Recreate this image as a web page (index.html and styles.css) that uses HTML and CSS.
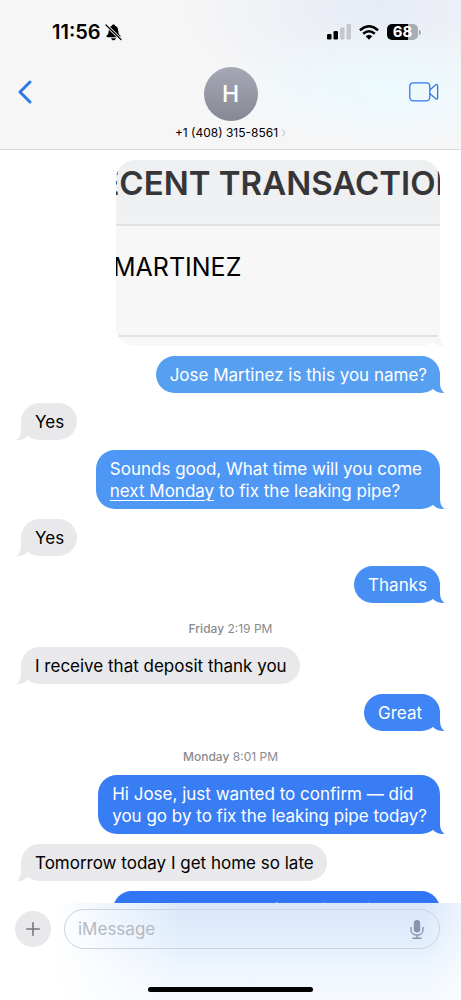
FILE: index.html
```html
<!DOCTYPE html>
<html lang="en">
<head>
<meta charset="utf-8">
<meta name="viewport" content="width=device-width, initial-scale=1">
<title>Messages</title>
<link rel="stylesheet" href="styles.css">
</head>
<body>
<svg class="sprite" aria-hidden="true">
  <symbol id="tail" viewBox="0 0 17 20">
    <path d="M12 0V9C12 14.500 13.500 18.500 17 19.800C12 20.300 8 19 5 16H0V0Z"/>
  </symbol>
</svg>
<div class="phone">
  <header class="top">
    <div class="status">
      <div class="status-left">
        <span class="time">11:56</span>
        <svg class="bell" viewBox="0 0 17 17" aria-hidden="true">
          <path d="M8.500 0.500C9.600 .5 10 1.200 10.100 1.800C12.300 2.500 13.200 4.500 13.300 7C13.400 9.500 14 10.300 15.200 11.500C15.900 12.300 15.500 13.200 14.500 13.200H2.500C1.500 13.200 1.100 12.300 1.800 11.500C3 10.300 3.600 9.500 3.700 7C3.800 4.500 4.700 2.500 6.900 1.800C7 1.200 7.400.5 8.500.5ZM6.200 14.200H10.800C10.500 15.600 9.700 16.300 8.500 16.300S6.500 15.600 6.200 14.200Z"/>
          <path d="M1.200 1.200L16 15.500" stroke="#f6f6f7" stroke-width="3"/>
          <path d="M1 1L16 15.500" stroke="#000" stroke-width="1.200" stroke-linecap="round"/>
        </svg>
      </div>
      <div class="status-right">
        <svg class="signal" viewBox="0 0 25 16" aria-hidden="true">
          <rect x="0" y="10" width="4.500" height="5.500" rx="1.200"/>
          <rect x="6.500" y="7" width="4.500" height="8.500" rx="1.200"/>
          <g fill="#c3c7ce"><rect x="13" y="3.500" width="4.500" height="12" rx="1.200"/><rect x="19.500" y="0" width="4.500" height="15.500" rx="1.200"/></g>
        </svg>
        <svg class="wifi" viewBox="0 0 20 15" aria-hidden="true">
          <g fill="none" stroke="#000" stroke-width="2.500"><path d="M.9 5.300Q10-2.800 19.100 5.300"/><path d="M4.200 8.800Q10 3.700 15.800 8.800"/></g>
          <path d="M6.700 11.300Q10 8.300 13.300 11.300L10 14.700Z"/>
        </svg>
        <div class="battery">68</div>
        <span class="battery-cap"></span>
      </div>
    </div>
    <nav class="bar">
      <button class="icon-btn" aria-label="Back">
        <svg class="back" viewBox="0 0 14 24" aria-hidden="true"><path d="M12 2L2 12L12 22"/></svg>
      </button>
      <button class="contact">
        <span class="avatar">H</span>
        <span class="number">+1 (408) 315-8561
          <svg class="chev" viewBox="0 0 5 8" aria-hidden="true"><path d="M1 .5L4 4L1 7.500"/></svg>
        </span>
      </button>
      <button class="icon-btn end" aria-label="Video call">
        <svg class="video" viewBox="0 0 30 20" aria-hidden="true"><rect x=".8" y=".8" width="20" height="18" rx="3.500"/><path d="M20.800 8L26.500 3Q28.600 1.600 28.600 3.800V15.800Q28.600 18 26.500 16.600L20.800 11.600"/></svg>
      </button>
    </nav>
  </header>

  <main class="chat">
    <div class="photo">
      <div class="photo-card">
        <div class="photo-head">RECENT TRANSACTIONS</div>
        <div class="photo-row">MARTINEZ</div>
      </div>
      <svg class="tail"><use href="#tail"/></svg>
    </div>
    <div class="bubble sent s1">Jose Martinez is this you name?<svg class="tail"><use href="#tail"/></svg></div>
    <div class="bubble got">Yes<svg class="tail"><use href="#tail"/></svg></div>
    <div class="bubble sent roomy s2">Sounds good, What time will you come<br><a href="#monday">next Monday</a> to fix the leaking pipe?<svg class="tail"><use href="#tail"/></svg></div>
    <div class="bubble got">Yes<svg class="tail"><use href="#tail"/></svg></div>
    <div class="bubble sent s3">Thanks<svg class="tail"><use href="#tail"/></svg></div>
    <div class="stamp"><b>Friday</b> 2:19 PM</div>
    <div class="bubble got">I receive that deposit thank you<svg class="tail"><use href="#tail"/></svg></div>
    <div class="bubble sent roomy s4">Great<svg class="tail"><use href="#tail"/></svg></div>
    <div class="stamp"><b>Monday</b> 8:01 PM</div>
    <div class="bubble sent s5">Hi Jose, just wanted to confirm — did<br>you go by to fix the leaking pipe today?<svg class="tail"><use href="#tail"/></svg></div>
    <div class="bubble got">Tomorrow today I get home so late<svg class="tail"><use href="#tail"/></svg></div>
    <div class="bubble sent s6">No problem what time of day for both<svg class="tail"><use href="#tail"/></svg></div>
  </main>

  <footer class="composer">
    <div class="compose-row">
      <button class="plus" aria-label="Add attachment">
        <svg viewBox="0 0 14 14" aria-hidden="true"><path d="M7 .8V13.200M.8 7H13.200"/></svg>
      </button>
      <div class="field">
        <input type="text" placeholder="iMessage" aria-label="iMessage">
        <button class="mic" aria-label="Dictate">
          <svg viewBox="0 0 14 19" aria-hidden="true"><rect x="3.800" y="0" width="6.400" height="12.500" rx="3.200" fill="#8795aa"/><path d="M1 7.500V9.500C1 17 13 17 13 9.500V7.500M7 15V18M3 18.200H11" fill="none" stroke="#8795aa" stroke-width="1.400" stroke-linecap="round"/></svg>
        </button>
      </div>
    </div>
    <div class="home"></div>
  </footer>
</div>
</body>
</html>
```
FILE: styles.css
```css
* { box-sizing: border-box; }
body { margin: 0; background: #fff; color: #000; font-family: Inter, "Liberation Sans", sans-serif; }
button { border: 0; padding: 0; background: none; font: inherit; color: inherit; }
svg { display: block; }
.sprite { position: absolute; width: 0; height: 0; }
.phone { display: flex; flex-direction: column; height: 100vh; overflow: hidden; }

.top {
  flex: none;
  padding: 20px 22px 8px;
  border-bottom: 1px solid #dcdde0;
  background:
    radial-gradient(ellipse 38% 42% at 84% 58%, #ecfaff 0%, #ecfaff00 100%),
    radial-gradient(ellipse 42% 65% at 82% 5%, #e6ebf5 0%, #e6ebf500 100%),
    #f6f6f7;
}
.status { display: flex; justify-content: space-between; align-items: center; height: 24px; padding: 0 18px 0 30px; }
.status-left, .status-right { display: flex; align-items: center; }
.time { font-size: 20px; font-weight: 600; line-height: 24px; }
.bell { width: 17px; height: 17px; margin-left: 4px; }
.signal { width: 25px; height: 16px; }
.wifi { width: 20px; height: 15px; margin-left: 7px; }
.battery {
  width: 31px; height: 16px; margin-left: 8px; border-radius: 5px;
  background: linear-gradient(90deg, #000 68%, #a7adb4 68%);
  color: #fff; font-size: 15px; font-weight: 700; line-height: 16px; text-align: center;
}
.battery-cap { width: 2px; height: 5px; margin-left: 1px; border-radius: 0 2px 2px 0; background: #a7adb4; }

.bar { display: grid; grid-template-columns: 1fr auto 1fr; align-items: start; padding-top: 23px; }
.icon-btn { display: flex; align-items: center; height: 50px; justify-self: start; }
.icon-btn.end { justify-self: end; }
.back { width: 14px; height: 24px; margin-left: -4px; fill: none; stroke: #2f78ea; stroke-width: 3; stroke-linecap: round; stroke-linejoin: round; }
.video { width: 30px; height: 20px; fill: none; stroke: #2f78ea; stroke-width: 1.300; }
.contact { display: flex; flex-direction: column; align-items: center; gap: 4px; }
.avatar { width: 54px; height: 54px; border-radius: 50%; background: linear-gradient(#a6a9b5, #868994); color: #fff; font-size: 23px; font-weight: 500; line-height: 54px; text-align: center; }
.number { display: flex; align-items: center; gap: 3px; font-size: 12px; line-height: 16px; }
.chev { width: 5px; height: 8px; fill: none; stroke: #b9bbc0; }

.chat { flex: 1; min-height: 0; overflow: hidden; display: flex; flex-direction: column; gap: 10px; padding: 10px 21px 0; }
.bubble { position: relative; flex: none; padding: 8px 13px 7px; border-radius: 19px; font-size: 17px; line-height: 22px; white-space: nowrap; }
.sent { align-self: flex-end; padding-left: 14px; color: #fff; }
.roomy { padding-right: 18px; }
.got { align-self: flex-start; padding-left: 14px; background: #e9e9eb; color: #000; }
.tail { position: absolute; right: -5px; bottom: 0; width: 17px; height: 20px; z-index: -1; fill: #57a0f1; }
.got .tail { right: auto; left: -5px; transform: scaleX(-1); fill: #e9e9eb; }
.bubble a { color: inherit; text-decoration: underline; text-decoration-thickness: 1px; text-underline-offset: 3px; }
.s1 { background: #57a0f1; }
.s2 { background: #4e97f4; }
.s2 .tail { fill: #4e97f4; }
.s3 { background: #488ff4; }
.s3 .tail { fill: #488ff4; }
.s4 { background: #3f85f5; }
.s4 .tail { fill: #3f85f5; }
.s5 { background: #397df5; }
.s5 .tail { fill: #397df5; }
.s6 { background: #3276f5; }
.s6 .tail { fill: #3276f5; }
.stamp { flex: none; padding-top: 8px; color: #8a8a8e; font-size: 12px; line-height: 16px; text-align: center; }
.stamp b { font-weight: 500; }

.photo { position: relative; flex: none; align-self: flex-end; width: 78%; max-width: 324px; height: 186px; }
.photo .tail { fill: #f7f7f7; }
.photo-card { height: 100%; overflow: hidden; border-radius: 19px; background: #f7f7f7; display: flex; flex-direction: column; }
.photo-head { display: flex; justify-content: center; height: 66px; padding-left: 4px; background: linear-gradient(#edeff1, #f0f1f3); border-bottom: 2px solid #e1e2e4; color: #363639; font-size: 33px; font-weight: 600; line-height: 46px; white-space: nowrap; }
.photo-row { height: 111px; margin-left: -3px; border-bottom: 2px solid #e1e1e2; font-size: 25px; line-height: 82px; }

.composer {
  flex: none;
  padding: 6px 0 8px;
  background: linear-gradient(90deg, #fff 12%, #fff0 40%, #fff0 92%, #ffffff80), linear-gradient(#d9e7fa, #e2eefc 40%, #eff6fe 70%, #f5f9ff);
}
.compose-row { display: flex; align-items: center; gap: 13px; padding: 0 21px 0 15px; }
.plus { flex: none; display: grid; place-items: center; width: 36px; height: 36px; border-radius: 50%; background: #e9e9eb; }
.plus svg { width: 14px; height: 14px; fill: none; stroke: #77777b; stroke-width: 1.600; stroke-linecap: round; }
.field { flex: 1; min-width: 0; display: flex; align-items: center; height: 40px; padding: 0 15px 0 13px; border: 1px solid #ccd3dd; border-radius: 20px; }
.field input { flex: 1; min-width: 0; border: 0; padding: 0; outline: 0; background: none; font: inherit; font-size: 17px; line-height: 24px; }
.field input::placeholder { color: #b3b9c3; opacity: 1; }
.mic svg { width: 14px; height: 19px; }
.home { width: 165px; height: 5px; margin: 38px auto 0; border-radius: 3px; background: #000; }
```
